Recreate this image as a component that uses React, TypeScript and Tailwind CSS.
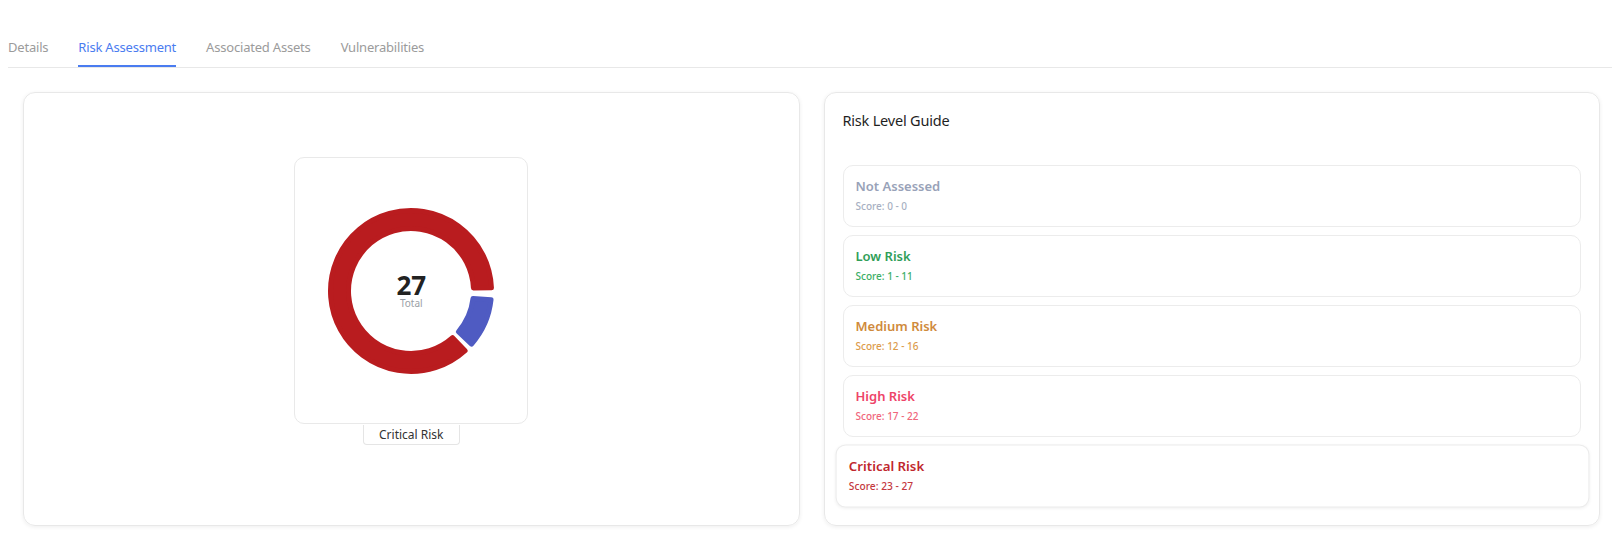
import React from 'react';

const FONT = { fontFamily: '"Segoe UI", "Noto Sans", "Open Sans", sans-serif' };

const tabs = ['Details', 'Risk Assessment', 'Associated Assets', 'Vulnerabilities'];

const levels = [
  { name: 'Not Assessed', range: '0 - 0', title: 'text-[#98a2b8]', score: 'text-[#a7b0c2]' },
  { name: 'Low Risk', range: '1 - 11', title: 'text-[#2f9e58]', score: 'text-[#3cae66]' },
  { name: 'Medium Risk', range: '12 - 16', title: 'text-[#cf8a3c]', score: 'text-[#dc9b4c]' },
  { name: 'High Risk', range: '17 - 22', title: 'text-[#ee4468]', score: 'text-[#f0667c]' },
  { name: 'Critical Risk', range: '23 - 27', title: 'text-[#c0272d]', score: 'text-[#c4383e]', active: true },
];

// annular sector with rounded corners (inset geometry + round-joined stroke)
function sector(cx: number, cy: number, R: number, r: number, a0: number, a1: number, c: number) {
  const ro = R - c;
  const ri = r + c;
  const rad = (d: number) => (d * Math.PI) / 180;
  const dO = (c / ro) * (180 / Math.PI);
  const dI = (c / ri) * (180 / Math.PI);
  const o0 = rad(a0 + dO), o1 = rad(a1 - dO);
  const i0 = rad(a0 + dI), i1 = rad(a1 - dI);
  const large = a1 - a0 > 180 ? 1 : 0;
  const p = (rr: number, a: number) => `${(cx + rr * Math.cos(a)).toFixed(2)} ${(cy + rr * Math.sin(a)).toFixed(2)}`;
  return `M ${p(ro, o0)} A ${ro} ${ro} 0 ${large} 1 ${p(ro, o1)} L ${p(ri, i1)} A ${ri} ${ri} 0 ${large} 0 ${p(ri, i0)} Z`;
}

function Donut() {
  const segs = [
    { a0: 46, a1: 359.5, color: '#b91c1f' },
    { a0: 4.5, a1: 43, color: '#4f5bc2' },
  ];
  return (
    <div className="relative w-[170px] h-[170px]">
      <svg width="170" height="170" viewBox="0 0 170 170">
        {segs.map((s, i) => (
          <path
            key={i}
            d={sector(85, 85, 83, 60, s.a0, s.a1, 2.5)}
            fill={s.color}
            stroke={s.color}
            strokeWidth={5}
            strokeLinejoin="round"
          />
        ))}
      </svg>
      <div className="absolute inset-0 flex flex-col items-center justify-center">
        <span className="text-[26px] font-bold leading-[24px] text-[#222]">27</span>
        <span className="text-[10px] leading-[12px] text-[#9aa0a6]">Total</span>
      </div>
    </div>
  );
}

export default function App() {
  return (
    <div className="min-h-[542px] bg-white" style={FONT}>
      {/* tabs */}
      <nav className="ml-[8px] flex gap-[30px] border-b border-[#e8e8e8] pt-[36px]">
        {tabs.map(t => (
          <div
            key={t}
            className={`text-[13px] tracking-[-0.2px] leading-[22px] pb-[7px] border-b-2 ${t === 'Risk Assessment' ? 'text-[#4a7cf0] border-[#4a7cf0]' : 'text-[#9b9b9b] border-transparent'}`}
          >
            {t}
          </div>
        ))}
      </nav>

      <div className="grid grid-cols-2 gap-[24px] pl-[23px] pr-[12px] mt-[24px]">
        {/* score chart */}
        <section className="rounded-[12px] border border-[#e8e8e8] shadow-[0_1px_4px_rgba(0,0,0,0.07)] flex flex-col items-center pt-[64px]">
          <div className="w-[234px] h-[267px] rounded-[10px] border border-[#e9e9e9] flex items-center justify-center">
            <Donut />
          </div>
          <div className="mt-px px-[15px] h-[20px] border border-t-0 border-[#e5e5e5] rounded-b-[4px] text-[12px] leading-[19px] text-[#333]">
            Critical Risk
          </div>
        </section>

        {/* guide */}
        <section className="rounded-[12px] border border-[#e8e8e8] shadow-[0_1px_4px_rgba(0,0,0,0.07)] p-[18px]">
          <h3 className="text-[14.5px] tracking-[-0.2px] leading-[18px] text-[#1f1f1f]">Risk Level Guide</h3>
          <div className="mt-[36px] flex flex-col gap-[8px]">
            {levels.map(l => (
              <div
                key={l.name}
                className={`h-[62px] rounded-[10px] border border-[#ececec] bg-white pt-[11px] px-[12px] ${l.active ? 'scale-[1.02] shadow-[0_1px_3px_rgba(0,0,0,0.05)]' : ''}`}
              >
                <div className={`text-[13px] leading-[18px] font-semibold ${l.title}`}>{l.name}</div>
                <div className={`mt-[4px] text-[10px] leading-[14px] font-medium ${l.score}`}>Score: {l.range}</div>
              </div>
            ))}
          </div>
        </section>
      </div>
    </div>
  );
}
